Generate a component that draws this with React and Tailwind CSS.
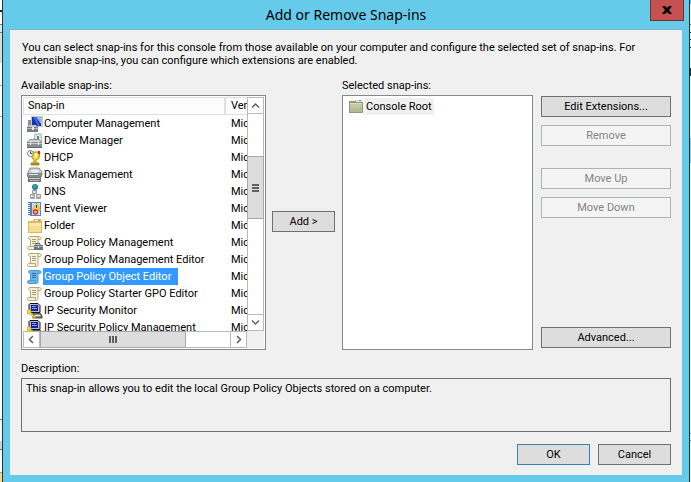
import React from "react";

const FONT = "font-['Roboto',sans-serif]";

function Icon({ children }) {
  return (
    <svg viewBox="0 0 16 16" className="size-4 shrink-0" aria-hidden="true">
      {children}
    </svg>
  );
}

function Computer() {
  return (
    <Icon>
      <path d="M1 4h4v8H1z" fill="#8c9092" />
      <path d="M4 0h12v11H4z" fill="#c9c5b6" />
      <path d="M5 1h9v9H5z" fill="#1531b8" />
      <path d="M9 1h5v7z" fill="#8fb4f5" />
      <path d="M6 1h3l4 9h-2z" fill="#3c68df" />
      <path d="M0 11l2-2h7l2 2v5H0z" fill="#777d80" />
      <path d="M2 9h7l1 2H1z" fill="#c3c7c9" />
      <path d="M0 12h11v1H0z" fill="#b6babc" />
      <path d="M5 11h2v3H5z" fill="#eceeef" />
    </Icon>
  );
}

function Device() {
  return (
    <Icon>
      <path d="M8 1h6l1 8H7z" fill="#e4e7e5" stroke="#8d9293" strokeWidth=".7" />
      <path d="M10 3h2v4h-2z" fill="#3da25a" />
      <path d="M0 9l3-3h9l3 3v6H0z" fill="#888e90" />
      <path d="M3 7h9l2 2H1z" fill="#d0d4d5" />
      <path d="M0 10h15v1H0z" fill="#c5c9ca" />
      <path d="M3 9h1v3H3zM11 9h1v3h-1z" fill="#eef0f0" />
      <path d="M0 14h15v1H0z" fill="#62686a" />
    </Icon>
  );
}

function Dhcp() {
  return (
    <Icon>
      <path d="M5 2h8l-1 6-3 2v3h3v2H4v-2h3v-3L5 8z" fill="#f2d82a" stroke="#8b7610" strokeWidth=".8" />
      <path d="M8 3h2v5H8z" fill="#fff7a0" />
      <path d="M11 1h2v3h-2z" fill="#cf2b20" />
      <circle cx="3.500" cy="3.500" r="3" fill="#f5f5f5" stroke="#858585" />
      <path d="M3.500 1.500v2h2" fill="none" stroke="#444" />
      <path d="M4 13h8v2H4z" fill="#a48b1a" />
    </Icon>
  );
}

function Disk() {
  return (
    <Icon>
      <path d="M3 1h9l3 4v3H1V5z" fill="#c6c9ca" stroke="#7e8385" strokeWidth=".8" />
      <ellipse cx="8" cy="4" rx="4" ry="1.500" fill="#eff1f1" />
      <path d="M0 6h15v4H0z" fill="#858b8d" />
      <path d="M2 7h9v1H2z" fill="#dfe2e3" />
      <path d="M12 7h2v1h-2z" fill="#4ed24f" />
      <path d="M1 10h13v5H1z" fill="#72787a" />
      <path d="M2 11h11v1H2z" fill="#c9cdce" />
      <path d="M3 13h9v1H3z" fill="#b3b7b8" />
    </Icon>
  );
}

function Dns() {
  return (
    <Icon>
      <circle cx="8" cy="3" r="3" fill="#2476bd" />
      <path d="M6 1.500l3-1 1 2-2 2-2-1z" fill="#3fae4d" />
      <path d="M5.500 6.500h4v3h-4zM3.500 10.500h4v3h-4zM9.500 10.500h4v3h-4z" fill="#f4f5f6" stroke="#92999c" />
      <path d="M7 7.500h2v1H7zM5 11.500h2v1H5zM10.500 11.500h2v1h-2z" fill="#a8afb2" />
      <path d="M3 14.500h5M9 14.500h5" stroke="#a4aaad" />
    </Icon>
  );
}

function Events() {
  return (
    <Icon>
      <path d="M3 1h11v14H3z" fill="#5384c2" />
      <path d="M5 2h8v12H5z" fill="#cfdff2" />
      <path d="M2 1v14" stroke="#5e6e83" strokeWidth="2" strokeDasharray="1 1" />
      <path d="M9.500 2l4 7h-8z" fill="#ffd33c" stroke="#c6952a" strokeWidth=".6" />
      <path d="M9 4h1v3H9z" fill="#4c3b09" />
      <circle cx="8.500" cy="11" r="2.800" fill="#cf352b" />
      <path d="M7.500 10l2 2m0-2l-2 2" stroke="#fff" strokeWidth=".9" />
    </Icon>
  );
}

function Folder() {
  return (
    <Icon>
      <path d="M1 3h5l1-2h7v2h1v12H1z" fill="#dfb75c" />
      <path d="M8 2h5v1H8z" fill="#fff" />
      <path d="M11 2h2v1h-2z" fill="#5c9bda" />
      <path d="M2 5h12v9H2z" fill="#f6dc8e" />
      <path d="M2 5h12v3H2z" fill="#fbe8ad" />
    </Icon>
  );
}

function Scroll({ blue = false, lock = false }) {
  const paper = blue ? "#69b5ec" : "#f8f1d4";
  const edge = blue ? "#4a9cd8" : "#b6a97d";
  const lines = blue ? "#236fae" : "#a29a7f";
  return (
    <Icon>
      <path
        d="M3 1.500h9.500c2 0 2 3 .5 3H11v8c0 2-1 2-2 2H2c-2 0-2-3 0-3h1.500v-7C1 4.500 1 1.500 3 1.500z"
        fill={paper}
        stroke={edge}
      />
      <path d="M11 2v2.500M3 11.500h5.500v2.500" fill="none" stroke={edge} />
      <path d="M5 4.500h4M5 6.500h4M5 8.500h4" stroke={lines} />
      {lock && (
        <>
          <path d="M9 10V8.500h4V10" fill="none" stroke="#59636e" />
          <path d="M7 10h9v5H7z" fill="#667482" />
          <path d="M7 11h9v1H7z" fill="#9cabba" />
          <path d="M11 11h1v2h-1z" fill="#f1f3f5" />
        </>
      )}
    </Icon>
  );
}

function Security() {
  return (
    <Icon>
      <path d="M3 .5h8l2 2v7H4l-2-2v-6z" fill="#b9b9b9" stroke="#161616" />
      <path d="M4 2h7v6H4z" fill="#1420a4" />
      <path d="M5 3h4v1H5zM5 5h5v1H5z" fill="#7fa5ff" />
      <path d="M6 10h7l2 3v2H6z" fill="#8c8c8c" stroke="#161616" strokeWidth=".8" />
      <path d="M8 12h5v1H8z" fill="#ececec" />
      <path d="M0 8l2-2 2 2v2l5 4-1 1.500-6-5H0z" fill="#f3dd20" stroke="#9c8b10" strokeWidth=".5" />
    </Icon>
  );
}

function ConsoleFolder() {
  return (
    <Icon>
      <path d="M1 2h6l1-1h6v2h1v11H1z" fill="#8f9b7d" />
      <path d="M8 1h6v2H8z" fill="#dce5dc" />
      <path d="M11 1h2v1h-2z" fill="#4b94cf" />
      <path d="M2 4h12v9H2z" fill="#c3c7a3" />
      <path d="M2 4h12v1H2z" fill="#dadcc0" />
      <path d="M2 9h12v4H2z" fill="#b4bb98" />
    </Icon>
  );
}

const rows = [
  ["Computer Management", <Computer />],
  ["Device Manager", <Device />],
  ["DHCP", <Dhcp />],
  ["Disk Management", <Disk />],
  ["DNS", <Dns />],
  ["Event Viewer", <Events />],
  ["Folder", <Folder />],
  ["Group Policy Management", <Scroll lock />],
  ["Group Policy Management Editor", <Scroll />],
  ["Group Policy Object Editor", <Scroll blue />],
  ["Group Policy Starter GPO Editor", <Scroll />],
  ["IP Security Monitor", <Security />],
  ["IP Security Policy Management", <Security />],
];

function Button({ children, className = "", border = "border-[#707070]", ...rest }) {
  return (
    <button
      type="button"
      className={`h-[21px] shrink-0 border bg-[#dddddd] text-center leading-[19px] disabled:border-[#adb2b5] disabled:bg-[#f4f4f4] disabled:text-[#838383] ${border} ${className}`}
      {...rest}
    >
      {children}
    </button>
  );
}

function ScrollButton({ label, d }) {
  return (
    <button
      type="button"
      aria-label={label}
      className="flex size-[17px] shrink-0 items-center justify-center border border-[#bababa] bg-white"
    >
      <svg viewBox="0 0 9 9" className="size-[9px]" aria-hidden="true">
        <path d={d} fill="none" stroke="#606060" strokeWidth="1.500" />
      </svg>
    </button>
  );
}

function SnapinList() {
  return (
    <div className="grid h-[255px] grid-cols-[minmax(0,1fr)_17px] grid-rows-[minmax(0,1fr)_17px] border border-[#828790] bg-white p-px">
      <div className="overflow-hidden">
        <table className="w-full table-fixed border-separate border-spacing-0 text-left">
          <thead>
            <tr className="bg-[#fcfcfc]">
              <th className="h-[18px] border border-[#e0e0e0] p-0 pl-1 font-normal leading-4">Snap-in</th>
              <th className="h-[18px] w-[22px] border-y border-l border-[#e0e0e0] p-0 pl-[5px] font-normal leading-4">
                <span className="block overflow-hidden">Vendor</span>
              </th>
            </tr>
          </thead>
          <tbody>
            {rows.map(([name, icon]) => {
              const selected = name === "Group Policy Object Editor";
              return (
                <tr key={name} className="h-[17px]" aria-selected={selected}>
                  <td className="p-0">
                    <div className="flex h-[17px] items-center pl-1">
                      {icon}
                      <span
                        className={`whitespace-nowrap pl-px leading-[17px] ${selected ? "bg-[#3399ff] pr-[7px] text-white" : ""}`}
                      >
                        {name}
                      </span>
                    </div>
                  </td>
                  <td className="p-0 pl-1.5 leading-[17px]">
                    <span className="block overflow-hidden">Microsoft</span>
                  </td>
                </tr>
              );
            })}
          </tbody>
        </table>
      </div>
      <div className="flex flex-col border-x border-[#bababa]">
        <div className="-mx-px">
          <ScrollButton label="Scroll up" d="M1 6.500l3.500-3.500L8 6.500" />
        </div>
        <div className="h-[42px]" />
        <div className="-mx-px flex h-[63px] flex-col items-center justify-center gap-px border border-[#a8a8a8] bg-[#dddddd]">
          <i className="h-0.5 w-[7px] bg-[#606060]" />
          <i className="h-0.5 w-[7px] bg-[#606060]" />
          <i className="h-0.5 w-[7px] bg-[#606060]" />
        </div>
        <div className="-mx-px mt-auto">
          <ScrollButton label="Scroll down" d="M1 2.500L4.500 6 8 2.500" />
        </div>
      </div>
      <div className="flex border-y border-[#bababa]">
        <div className="-my-px">
          <ScrollButton label="Scroll left" d="M6 1L2.500 4.500 6 8" />
        </div>
        <div className="-my-px flex w-[146px] items-center justify-center gap-px border border-[#a8a8a8] bg-[#dddddd]">
          <i className="h-[7px] w-0.5 bg-[#606060]" />
          <i className="h-[7px] w-0.5 bg-[#606060]" />
          <i className="h-[7px] w-0.5 bg-[#606060]" />
        </div>
        <div className="-my-px ml-auto">
          <ScrollButton label="Scroll right" d="M3 1l3.500 3.500L3 8" />
        </div>
      </div>
      <div className="bg-[#f0f0f0]" />
    </div>
  );
}

function LeftEdge() {
  return (
    <div className="flex w-0.5 shrink-0 flex-col bg-white" aria-hidden="true">
      <div className="h-3 border-b-2 border-[#222]" />
      <div className="mt-3 h-[9px] border-y border-[#6b8190] bg-[#dce9ef]" />
      <div className="h-[30px] bg-[#d9dcdc]" />
      <div className="h-[23px] border-b border-[#aaa]" />
      <div className="h-[31px] border-b border-[#aaa]" />
      <div className="mt-auto h-[22px] border-t border-[#777] bg-[#f5f5f5]" />
      <div className="h-[9px] border-b border-[#777] bg-[#cbd4d9]" />
      <div className="mt-[22px] h-[10px] border-t border-[#999] bg-[#ffd982]" />
    </div>
  );
}

function RightEdge() {
  return (
    <div className="flex w-px shrink-0 flex-col bg-[#f0f0f0]" aria-hidden="true">
      <div className="h-1 bg-[#66cbea]" />
      <div className="h-[21px] border-b border-[#777]" />
      <div className="h-2 border-b border-[#333]" />
      <div className="h-[7px] border-b border-[#333]" />
      <div className="h-2 border-b border-[#333]" />
      <div className="mt-5 h-2 bg-[#222]" />
      <div className="mt-[62px] h-[25px] bg-[#a9c4d6]" />
      <div className="mb-[41px] mt-auto h-2 border-y border-[#888]" />
    </div>
  );
}

export default function App() {
  return (
    <div className={`flex min-h-screen text-[11px] leading-[13px] text-black ${FONT}`}>
      <LeftEdge />
      <main className="flex min-w-0 flex-1 flex-col border-x border-[#23343b] bg-[#66cbea] px-[7px] pb-[7px]">
        <header className="grid h-[29px] grid-cols-[1fr_auto_1fr]">
          <h1 className="col-start-2 font-['Noto_Sans',sans-serif] text-[14px] leading-[29px]">Add or Remove Snap-ins</h1>
          <button
            type="button"
            aria-label="Close"
            className="-mr-0.5 flex h-[21px] w-[34px] items-center justify-center justify-self-end border border-t-0 border-[#6d332f] bg-[#c75050]"
          >
            <svg viewBox="0 0 10 8" className="h-2 w-[10px]" aria-hidden="true">
              <path d="M0 0h3l2 2 2-2h3L7 4l3 4H7L5 6 3 8H0l3-4z" fill="#000" />
            </svg>
          </button>
        </header>

        <div className="flex flex-1 flex-col border-t border-[#7fb5c6] bg-[#f0f0f0] px-[11px] pb-[10px] pt-[11px]">
          <p className="max-w-[640px] pl-px">
            You can select snap-ins for this console from those available on your computer and configure the selected set of snap-ins. For extensible snap-ins, you can configure which extensions are enabled.
          </p>

          <div className="mt-3 flex">
            <section className="min-w-0 flex-[245]">
              <h2 className="mb-[3px]">Available snap-ins:</h2>
              <SnapinList />
            </section>
            <Button className="ml-1.5 mr-[7px] mt-[132px] w-[63px]">Add &gt;</Button>
            <section className="min-w-0 flex-[191]">
              <h2 className="mb-[3px]">Selected snap-ins:</h2>
              <ul className="h-[255px] border border-[#828790] bg-white px-[5px] py-0.5">
                <li className="flex h-[17px] items-center">
                  <ConsoleFolder />
                  <span className="bg-[#f0f0f0] px-0.5 leading-[17px]">Console Root</span>
                </li>
              </ul>
            </section>
            <div className="ml-2 flex w-[130px] shrink-0 flex-col pb-0.5 pt-[17px]">
              <Button>Edit Extensions...</Button>
              <Button disabled className="mt-2">Remove</Button>
              <Button disabled className="mt-[22px]">Move Up</Button>
              <Button disabled className="mt-2">Move Down</Button>
              <Button className="mt-auto">Advanced...</Button>
            </div>
          </div>

          <h2 className="mb-[3px] mt-3">Description:</h2>
          <div className="h-[54px] border border-[#707070] px-1 py-[3px]">
            This snap-in allows you to edit the local Group Policy Objects stored on a computer.
          </div>
          <footer className="mt-auto flex justify-end gap-2">
            <Button className="w-[73px]" border="border-[#3c7fb1]">OK</Button>
            <Button className="w-[73px]">Cancel</Button>
          </footer>
        </div>
      </main>
      <RightEdge />
    </div>
  );
}
